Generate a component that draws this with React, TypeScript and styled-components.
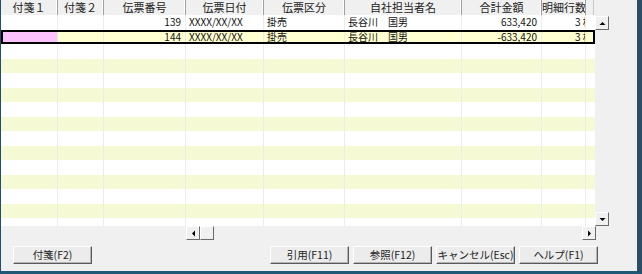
import styled, { createGlobalStyle } from 'styled-components';

const GlobalStyle = createGlobalStyle`
  html, body { margin: 0; padding: 0; background: #f0f0f0; }
  body { font-family: "Noto Sans CJK JP", "Noto Sans", sans-serif; color: #111; }
`;

type Col = { label: string; w: number; align: 'left' | 'right'; pad?: number };

const cols: Col[] = [
  { label: '付箋１', w: 57, align: 'left' },
  { label: '付箋２', w: 46, align: 'left' },
  { label: '伝票番号', w: 82, align: 'right' },
  { label: '伝票日付', w: 78, align: 'left' },
  { label: '伝票区分', w: 81, align: 'left' },
  { label: '自社担当者名', w: 117, align: 'left' },
  { label: '合計金額', w: 80, align: 'right' },
  { label: '明細行数', w: 44, align: 'left', pad: 33 },
];

const data = [
  ['', '', '139', 'XXXX/XX/XX', '掛売', '長谷川　国男', '633,420', '3 枚'],
  ['', '', '144', 'XXXX/XX/XX', '掛売', '長谷川　国男', '-633,420', '3 枚'],
];

const ROWS = 15;

const Window = styled.div`
  box-sizing: border-box;
  width: 642px;
  height: 274px;
  background: #f0f0f0;
  border-left: 1px solid #1d4f73;
  border-right: 5px solid #2b4d66;
  border-bottom: 3px solid #1f5877;
  display: flex;
  flex-direction: column;
  overflow: hidden;
`;

const Table = styled.div`
  display: flex;
  flex-direction: column;
`;

const HeaderRow = styled.div`
  display: flex;
  height: 15px;
`;

const HeaderCell = styled.div<{ $w: number }>`
  box-sizing: border-box;
  width: ${p => p.$w}px;
  flex: none;
  font-size: 11px;
  line-height: 15px;
  text-align: center;
  color: #222;
  border-right: 1px solid #a0a0a0;
  box-shadow: inset -1px 0 0 #fff;
  white-space: nowrap;
  overflow: hidden;
`;

const HeaderTail = styled.div`
  width: 7px;
  height: 15px;
  border-right: 1px solid #c8c8c8;
`;

const BodyArea = styled.div`
  display: flex;
  height: 211px;
`;

const Rows = styled.div`
  width: 594px;
  overflow: hidden;
  display: flex;
  flex-direction: column;
`;

const Row = styled.div<{ $stripe: boolean; $selected: boolean }>`
  display: flex;
  flex: none;
  height: 14.5px;
  background: ${p => (p.$selected ? '#ffffd2' : p.$stripe ? '#f6fad4' : '#fff')};
  outline: ${p => (p.$selected ? '2px solid #000' : 'none')};
  outline-offset: -2px;
`;

const Cell = styled.div<{ $w: number; $align: string; $pad?: number; $tag?: boolean }>`
  box-sizing: border-box;
  width: ${p => p.$w}px;
  flex: none;
  font-size: 10px;
  line-height: 14.5px;
  padding: 0 4px 0 ${p => p.$pad ?? 3}px;
  text-align: ${p => p.$align};
  white-space: pre;
  overflow: hidden;
  border-right: 1px solid #ececec;
  background: ${p => (p.$tag ? '#fbc2fb' : 'transparent')};
`;

const VScroll = styled.div`
  width: 14px;
  margin-top: 1px;
  display: flex;
  flex-direction: column;
  justify-content: space-between;
`;

const ScrollBtn = styled.div`
  box-sizing: border-box;
  width: 14px;
  height: 14px;
  background: #f0f0f0;
  border-top: 1px solid #fff;
  border-left: 1px solid #fff;
  border-right: 1px solid #696969;
  border-bottom: 1px solid #696969;
  display: flex;
  align-items: center;
  justify-content: center;
`;

const HScrollRow = styled.div`
  display: flex;
  height: 14px;
  padding-left: 185px;
`;

const HScroll = styled.div`
  width: 410px;
  display: flex;
  justify-content: space-between;
`;

const Thumbed = styled.div`
  display: flex;
`;

const ButtonBar = styled.div`
  display: flex;
  padding: 6px 0 0 12px;
`;

const Button = styled.button<{ $gap?: number }>`
  box-sizing: border-box;
  width: 79px;
  height: 18px;
  margin-left: ${p => p.$gap ?? 4}px;
  padding: 0;
  font-family: "Noto Sans CJK JP", "Noto Sans", sans-serif;
  font-size: 10.5px;
  line-height: 14px;
  white-space: nowrap;
  color: #222;
  background: #ececec;
  border: none;
  border-top: 1px solid #fff;
  border-left: 1px solid #fff;
  border-right: 1px solid #5a5a5a;
  border-bottom: 1px solid #5a5a5a;
  box-shadow: inset -1px -1px 0 #b4b4b4;
`;

function Arrow({ dir }: { dir: 'up' | 'down' | 'left' | 'right' }) {
  const pts = {
    up: '0.5,4 3.5,1 6.5,4',
    down: '0.5,1 3.5,4 6.5,1',
    left: '4,0.5 1,3.5 4,6.5',
    right: '1,0.5 4,3.5 1,6.5',
  }[dir];
  const vertical = dir === 'up' || dir === 'down';
  return (
    <svg width={vertical ? 7 : 5} height={vertical ? 5 : 7} viewBox={vertical ? '0 0 7 5' : '0 0 5 7'}>
      <polygon points={pts} fill="#000" />
    </svg>
  );
}

export default function App() {
  return (
    <>
      <GlobalStyle />
      <Window>
        <Table>
          <HeaderRow>
            {cols.map(c => (
              <HeaderCell key={c.label} $w={c.w}>{c.label}</HeaderCell>
            ))}
            <HeaderTail />
          </HeaderRow>
          <BodyArea>
            <Rows>
              {Array.from({ length: ROWS }).map((_, r) => {
                const vals = data[r] ?? [];
                return (
                  <Row key={r} $stripe={r % 2 === 1} $selected={r === 1}>
                    {cols.map((c, i) => (
                      <Cell key={i} $w={c.w} $align={c.align} $pad={c.pad} $tag={r === 1 && i === 0}>
                        {vals[i] ?? ''}
                      </Cell>
                    ))}
                  </Row>
                );
              })}
            </Rows>
            <VScroll>
              <ScrollBtn><Arrow dir="up" /></ScrollBtn>
              <ScrollBtn><Arrow dir="down" /></ScrollBtn>
            </VScroll>
          </BodyArea>
          <HScrollRow>
            <HScroll>
              <Thumbed>
                <ScrollBtn><Arrow dir="left" /></ScrollBtn>
                <ScrollBtn />
              </Thumbed>
              <ScrollBtn><Arrow dir="right" /></ScrollBtn>
            </HScroll>
          </HScrollRow>
        </Table>
        <ButtonBar>
          <Button $gap={0}>付箋(F2)</Button>
          <Button $gap={178}>引用(F11)</Button>
          <Button>参照(F12)</Button>
          <Button>キャンセル(Esc)</Button>
          <Button>ヘルプ(F1)</Button>
        </ButtonBar>
      </Window>
    </>
  );
}
